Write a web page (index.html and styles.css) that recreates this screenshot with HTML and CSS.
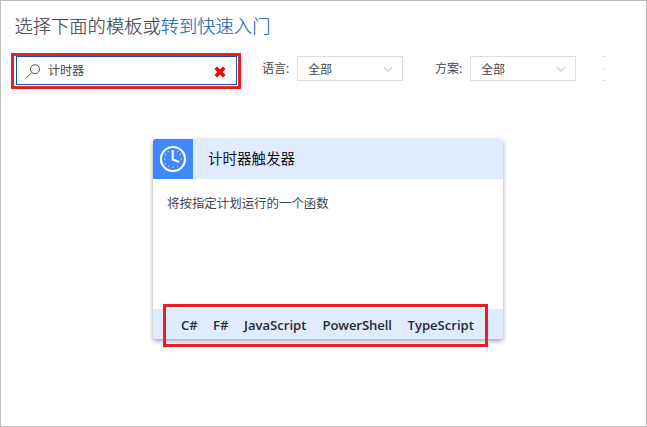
FILE: index.html
```html
<!DOCTYPE html>
<html lang="zh-CN">
<head>
<meta charset="utf-8">
<title>选择模板</title>
<link rel="stylesheet" href="styles.css">
</head>
<body>
<main class="page">
  <h1 class="heading">选择下面的模板或<a class="link">转到快速入门</a></h1>
  <div class="toolbar">
    <div class="search-mark">
      <div class="search">
        <svg class="search-icon" width="16" height="16" viewBox="0 0 16 16"><circle cx="10" cy="6.2" r="4.5"/><path d="M6.8 9.4 1.2 15"/></svg>
        <span class="search-text">计时器</span>
        <svg class="clear" width="12" height="12" viewBox="0 0 12 12"><path d="M1.8 1.8 10.2 10.2M10.2 1.8 1.8 10.2"/></svg>
      </div>
    </div>
    <span class="label label-language">语言:</span>
    <div class="select"><span>全部</span><svg class="chevron" width="10" height="7" viewBox="0 0 10 7"><path d="M.8 1 5 5.2 9.2 1"/></svg></div>
    <span class="label label-scenario">方案:</span>
    <div class="select"><span>全部</span><svg class="chevron" width="10" height="7" viewBox="0 0 10 7"><path d="M.8 1 5 5.2 9.2 1"/></svg></div>
    <div class="select-edge"></div>
  </div>
  <article class="card">
    <header class="card-head">
      <div class="card-icon">
        <svg width="28" height="28" viewBox="0 0 28 28">
          <circle class="rim" cx="14" cy="14" r="12"/>
          <path class="hands" d="M13.7 5.3V14.6L20.3 17"/>
          <path class="ticks" d="M5 14h1.6M21.4 14H23M14 21.4V23M9 6l.8 1.2M19 6l-.8 1.2M6 9l1.2.8M22 9l-1.2.8M6 19l1.2-.8M9 22l.8-1.2M19 22l-.8-1.2"/>
        </svg>
      </div>
      <h2 class="card-title">计时器触发器</h2>
    </header>
    <p class="card-text">将按指定计划运行的一个函数</p>
    <footer class="card-foot">
      <span class="lang short-c">C#</span><span class="lang short-f">F#</span><span class="lang js">JavaScript</span><span class="lang ps">PowerShell</span><span class="lang ts">TypeScript</span>
      <div class="foot-mark"></div>
    </footer>
  </article>
</main>
</body>
</html>
```
FILE: styles.css
```css
* { box-sizing: border-box; }
body {
  margin: 0;
  background: #fff;
  color: #3f4650;
  font-family: "Noto Sans", "Noto Sans CJK SC", sans-serif;
  font-size: 12px;
}
.page {
  width: 647px;
  height: 427px;
  border: 1px solid #bfbfbf;
  overflow: hidden;
}
.heading {
  margin: 11px 0 0 13.5px;
  height: 26px;
  font: 300 18.3px/26px "Noto Sans CJK SC", sans-serif;
  -webkit-text-stroke: .15px currentColor;
  white-space: nowrap;
}
.link { color: #1863b4; }
.toolbar {
  display: flex;
  align-items: flex-start;
  margin: 15px 0 0 10px;
  height: 36px;
}
.search-mark {
  width: 230px;
  height: 36px;
  border: 3px solid #ed1c24;
  padding: 0 1px 1px 2px;
}
.search {
  display: flex;
  align-items: center;
  height: 29px;
  border: 1px solid #0b58a8;
  padding: 0 10px 0 8px;
}
.search-icon { fill: none; stroke: #555; stroke-width: 1; }
.search-text { margin: 1px 0 0 7px; line-height: 20px; }
.clear { margin-left: auto; margin-top: 3px; fill: none; stroke: #f00; stroke-width: 3.7; }
.label { margin-top: 6px; line-height: 20px; white-space: nowrap; }
.label-language { width: 35px; margin-left: 21px; }
.label-scenario { width: 35px; margin-left: 32px; }
.select {
  display: flex;
  align-items: center;
  justify-content: space-between;
  width: 106px;
  height: 25px;
  margin-top: 3px;
  padding: 3px 9px 0 10px;
  border: 1px solid #d5e0e7;
  line-height: 22px;
}
.chevron { margin-top: -1px; fill: none; stroke: #d0dce4; stroke-width: 1.9; }
.select-edge {
  width: 3px;
  height: 25px;
  margin: 3px 0 0 27px;
  border: solid #dde6eb;
  border-width: 1px 0;
  background: linear-gradient(#d6e0e7, #d6e0e7) 0 11px / 1px 2px no-repeat;
}
.card {
  display: flex;
  flex-direction: column;
  width: 350px;
  height: 200px;
  margin: 50px 0 0 152px;
  border-radius: 3px;
  background: #fff;
  box-shadow: 0 2px 5px rgba(0, 0, 0, .38);
}
.card-head {
  display: flex;
  align-items: center;
  height: 40px;
  border-radius: 3px 3px 0 0;
  background: #dfebfe;
  overflow: hidden;
}
.card-icon {
  display: grid;
  place-items: center;
  width: 40px;
  height: 40px;
  background: #3e87fc;
}
.rim, .hands, .ticks { fill: none; stroke: #fff; }
.rim { stroke-width: 2.2; }
.hands { stroke-width: 2.1; }
.ticks { stroke-width: 1; opacity: .75; }
.card-title {
  margin: 0 0 2px 15px;
  color: #000;
  font: 350 14.5px/20px "Noto Sans CJK SC", sans-serif;
}
.card-text {
  margin: 15px 0 0 14px;
  font-size: 12.45px;
  line-height: 20px;
  white-space: nowrap;
}
.card-foot {
  position: relative;
  display: flex;
  align-items: center;
  height: 30px;
  margin-top: auto;
  padding: 1px 0 0 28px;
  border-radius: 0 0 3px 3px;
  background: #dfebfe;
  color: #252a33;
  font: 600 13.1px/20px "Open Sans", sans-serif;
}
.lang { white-space: nowrap; }
.short-c { width: 32px; }
.short-f { width: 31px; }
.js { width: 78.5px; }
.ps { width: 85px; letter-spacing: -.1px; }
.foot-mark {
  position: absolute;
  left: 10px;
  top: -5px;
  width: 325px;
  height: 43px;
  border: 3px solid #ed1c24;
}
```
